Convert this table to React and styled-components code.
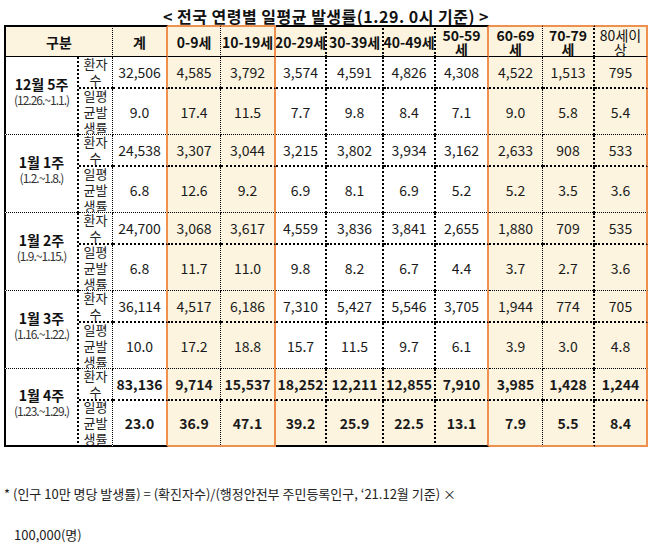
import styled, { createGlobalStyle } from 'styled-components';

const BEIGE = '#fcf4df';
const ORANGE = '#f0904e';

const GlobalStyle = createGlobalStyle`
  body {
    margin: 0;
    background: #fff;
    color: #111;
    font-family: "Noto Sans CJK KR", "Noto Sans", sans-serif;
  }
`;

// border kinds used by the sheet
const line = (kind) =>
  ({
    orange: `2px solid ${ORANGE}`,
    thin: '1px dotted #000',
    thick: '2px dotted #000',
    solid: '2px solid #000',
    hair: '1px solid #000',
  }[kind] || 'none');

const columns = [
  { key: 'total', label: ['계'], right: 'orange' },
  { key: 'a0', label: ['0-9세'], right: 'thin', hl: true },
  { key: 'a10', label: ['10-19세'], right: 'orange', hl: true },
  { key: 'a20', label: ['20-29세'], right: 'thick' },
  { key: 'a30', label: ['30-39세'], right: 'thick' },
  { key: 'a40', label: ['40-49세'], right: 'thick' },
  { key: 'a50', label: ['50-59', '세'], right: 'orange' },
  { key: 'a60', label: ['60-69', '세'], right: 'thin', hl: true },
  { key: 'a70', label: ['70-79', '세'], right: 'thick', hl: true },
  { key: 'a80', label: ['80세이', '상'], right: 'orange', hl: true, light: true },
];

const weeks = [
  {
    name: '12월 5주',
    range: '(12.26.~1.1.)',
    count: ['32,506', '4,585', '3,792', '3,574', '4,591', '4,826', '4,308', '4,522', '1,513', '795'],
    rate: ['9.0', '17.4', '11.5', '7.7', '9.8', '8.4', '7.1', '9.0', '5.8', '5.4'],
  },
  {
    name: '1월 1주',
    range: '(1.2.~1.8.)',
    count: ['24,538', '3,307', '3,044', '3,215', '3,802', '3,934', '3,162', '2,633', '908', '533'],
    rate: ['6.8', '12.6', '9.2', '6.9', '8.1', '6.9', '5.2', '5.2', '3.5', '3.6'],
  },
  {
    name: '1월 2주',
    range: '(1.9.~1.15.)',
    count: ['24,700', '3,068', '3,617', '4,559', '3,836', '3,841', '2,655', '1,880', '709', '535'],
    rate: ['6.8', '11.7', '11.0', '9.8', '8.2', '6.7', '4.4', '3.7', '2.7', '3.6'],
  },
  {
    name: '1월 3주',
    range: '(1.16.~1.22.)',
    count: ['36,114', '4,517', '6,186', '7,310', '5,427', '5,546', '3,705', '1,944', '774', '705'],
    rate: ['10.0', '17.2', '18.8', '15.7', '11.5', '9.7', '6.1', '3.9', '3.0', '4.8'],
  },
  {
    name: '1월 4주',
    range: '(1.23.~1.29.)',
    count: ['83,136', '9,714', '15,537', '18,252', '12,211', '12,855', '7,910', '3,985', '1,428', '1,244'],
    rate: ['23.0', '36.9', '47.1', '39.2', '25.9', '22.5', '13.1', '7.9', '5.5', '8.4'],
  },
];

const Page = styled.div`
  width: 653px;
  height: 550px;
  padding: 7px 0 0 4px;
  box-sizing: border-box;
`;

const Title = styled.div`
  width: 644px;
  height: 18px;
  text-align: center;
  font-size: 16px;
  line-height: 18px;
  letter-spacing: 0.5px;
  font-weight: 700;
  color: #111;
`;

const Sheet = styled.div`
  display: grid;
  grid-template-columns: 75px 34px 55px 53px 55px 51px 57px 52px 53px 54px 52px 53px;
  grid-template-rows: 32px repeat(5, 32px 46px);
  width: 644px;
`;

const Cell = styled.div`
  box-sizing: border-box;
  display: flex;
  flex-direction: column;
  align-items: center;
  justify-content: center;
  overflow: hidden;
  text-align: center;
  white-space: nowrap;
  font-size: 14px;
  line-height: 16px;
  color: #1a1a1a;
  font-weight: ${({ $bold }) => ($bold ? 700 : 400)};
  background: ${({ $bg }) => $bg || '#fff'};
  border-top: ${({ $top }) => line($top)};
  border-right: ${({ $right }) => line($right)};
  border-bottom: ${({ $bottom }) => line($bottom)};
  border-left: ${({ $left }) => line($left)};
  grid-column: ${({ $span }) => ($span ? `span ${$span}` : 'auto')};
  grid-row: ${({ $rows }) => ($rows ? `span ${$rows}` : 'auto')};
`;

const HeadCell = styled(Cell)`
  line-height: 14px;
  color: #111;
`;

const HeadPart = styled.span`
  display: block;
  height: 14px;
`;

const WeekCell = styled(Cell)`
  padding-bottom: 10px;
`;

const WeekName = styled.span`
  font-size: 14px;
  font-weight: 700;
  line-height: 18px;
  color: #111;
`;

const WeekRange = styled.span`
  font-size: 12px;
  line-height: 14px;
  letter-spacing: -1px;
  color: #333;
`;

const SubLabel = styled(Cell)`
  justify-content: center;
  white-space: normal;
  word-break: break-all;
  font-size: 13px;
  line-height: 16px;
  padding: 0 3px;
  color: #222;
`;

const Note = styled.div`
  margin-top: 26px;
  font-size: 13px;
  line-height: 41px;
  color: #222;
`;

const NoteLine = styled.div`
  padding-left: ${({ $indent }) => ($indent ? '10px' : '0')};
  white-space: nowrap;
`;

export default function App() {
  return (
    <>
      <GlobalStyle />
      <Page>
        <Title>&lt; 전국 연령별 일평균 발생률(1.29. 0시 기준) &gt;</Title>
        <Sheet>
          <HeadCell $span={2} $top="solid" $left="solid" $right="thin" $bottom="hair" $bg={BEIGE} $bold>
            구분
          </HeadCell>
          {columns.map((c) => (
            <HeadCell
              key={c.key}
              $top={c.hl ? 'orange' : 'solid'}
              $right={c.right}
              $bottom="hair"
              $bg={BEIGE}
              $bold={!c.light}
            >
              {c.label.map((part) => (
                <HeadPart key={part}>{part}</HeadPart>
              ))}
            </HeadCell>
          ))}

          {weeks.map((w, wi) => {
            const last = wi === weeks.length - 1;
            return [
              <WeekCell key={`${w.name}-name`} $rows={2} $left="solid" $right="thick" $bottom={last ? 'solid' : 'thin'}>
                <WeekName>{w.name}</WeekName>
                <WeekRange>{w.range}</WeekRange>
              </WeekCell>,
              <SubLabel key={`${w.name}-c`} $right="thin" $bottom="thick">
                환자수
              </SubLabel>,
              ...w.count.map((v, ci) => {
                const c = columns[ci];
                return (
                  <Cell
                    key={`${w.name}-c-${c.key}`}
                    $right={c.right}
                    $bottom="thick"
                    $bg={c.hl || (last && ci > 0) ? BEIGE : '#fff'}
                    $bold={last}
                  >
                    {v}
                  </Cell>
                );
              }),
              <SubLabel key={`${w.name}-r`} $right="thin" $bottom={last ? 'solid' : 'thin'}>
                일평균발생률
              </SubLabel>,
              ...w.rate.map((v, ci) => {
                const c = columns[ci];
                return (
                  <Cell
                    key={`${w.name}-r-${c.key}`}
                    $right={c.right}
                    $bottom={last ? (c.hl ? 'orange' : 'solid') : 'thin'}
                    $bg={c.hl || (last && ci > 0) ? BEIGE : '#fff'}
                    $bold={last}
                  >
                    {v}
                  </Cell>
                );
              }),
            ];
          })}
        </Sheet>
        <Note>
          <NoteLine>* (인구 10만 명당 발생률) = (확진자수)/(행정안전부 주민등록인구, ‘21.12월 기준) ×</NoteLine>
          <NoteLine $indent>100,000(명)</NoteLine>
        </Note>
      </Page>
    </>
  );
}
